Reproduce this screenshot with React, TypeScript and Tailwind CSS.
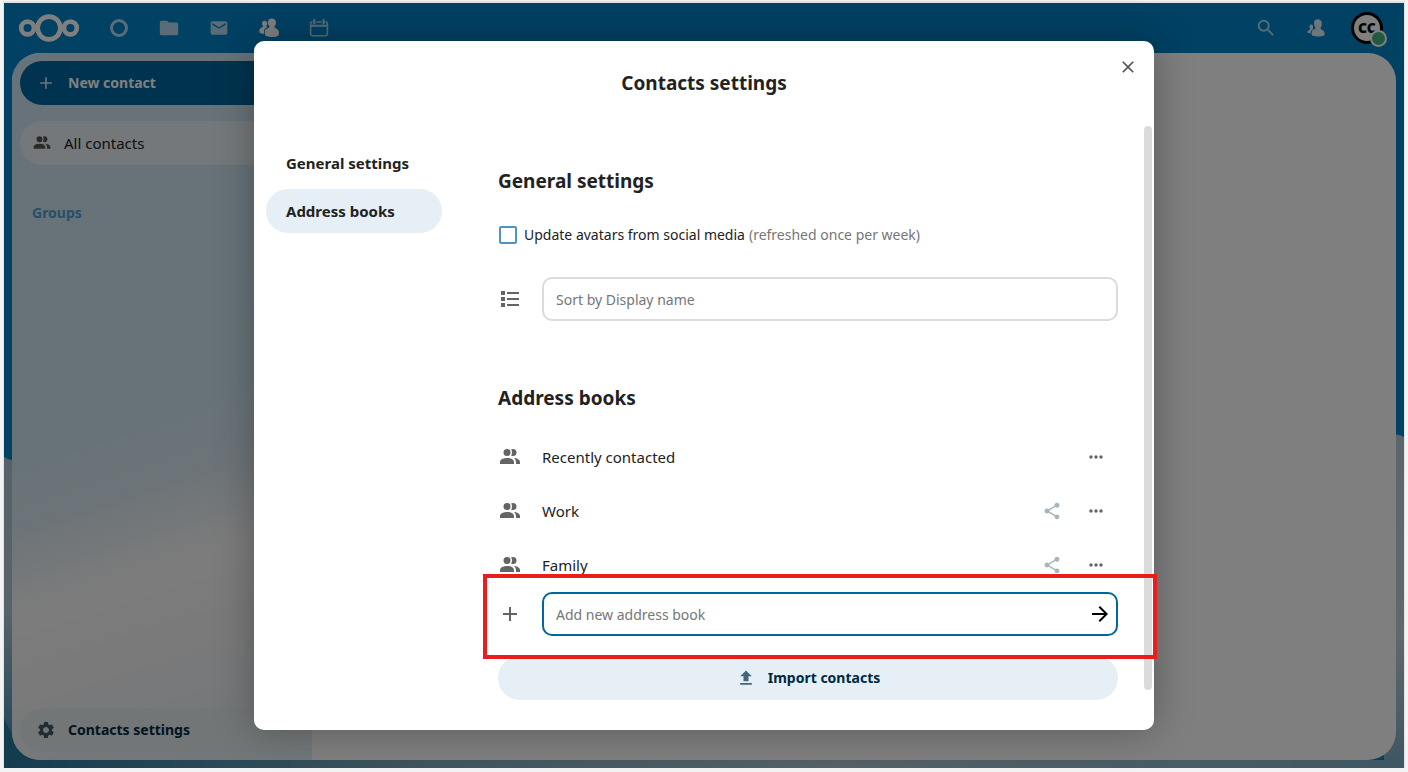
import React from "react";
import {
  MdSettings,
  MdSearch,
  MdAdd,
  MdClose,
  MdMoreHoriz,
  MdShare,
  MdUpload,
  MdFolder,
  MdEmail,
  MdArrowForward,
} from "react-icons/md";

function CloudLogo() {
  return (
    <svg width="62" height="28" viewBox="0 0 62 28" fill="none" stroke="#fff" aria-hidden="true">
      <circle cx="31" cy="14" r="11.4" strokeWidth="4.7" />
      <circle cx="9.600" cy="14" r="6.400" strokeWidth="4.7" />
      <circle cx="52.400" cy="14" r="6.400" strokeWidth="4.7" />
    </svg>
  );
}

function PeopleIcon({ size, className }: { size: number; className?: string }) {
  return (
    <svg width={size} height={size} viewBox="0 0 24 24" fill="currentColor" className={className} aria-hidden="true">
      <path d="M16 17V19H2V17S2 13 9 13 16 17 16 17M12.5 7.5A3.5 3.5 0 1 0 9 11A3.5 3.5 0 0 0 12.5 7.5M15.940 13A5.320 5.320 0 0 1 18 17V19H22V17S22 13.370 15.940 13M15 4A3.390 3.390 0 0 0 13.070 4.590A5 5 0 0 1 13.070 10.410A3.390 3.390 0 0 0 15 11A3.5 3.5 0 0 0 15 4Z" />
    </svg>
  );
}

function ContactsAppGlyph() {
  return (
    <svg width="20" height="20" viewBox="0 0 20 20" fill="currentColor" aria-hidden="true">
      <path d="M12.600.6C10.300.6 8.900 2.100 8.900 4.300c0 1.400.4 2.700 1.200 3.700.4.600.3 1.300-.2 1.700-1 .7-4.100 1.300-4.100 3.600V16c0 1.800 3 3 7 3s7-1 7-2.600v-2.600c0-2.300-2.800-3.200-3.900-4.100-.5-.4-.5-1.100-.1-1.700.8-1 1.200-2.300 1.200-3.700C17 2.100 15 .6 12.600.6z" />
      <path d="M5.500 2.800C4 2.800 3 3.900 3 5.400c0 .9.300 1.700.8 2.400.3.500.2.900-.2 1.200C2.900 9.600.4 10.200.4 12v2.200c0 .9 1.900 1.500 4.600 1.600v-2.600c0-2 1.700-3.100 3.500-3.900-.9-.2-1.300-.9-.9-1.500.4-.6.700-1.500.7-2.400 0-1.500-1.200-2.600-2.800-2.600z" />
    </svg>
  );
}

function ContactsMenuGlyph() {
  return (
    <svg width="18" height="18" viewBox="0 0 18 18" fill="currentColor" aria-hidden="true">
      <path d="M10.500.3C8.300.3 7 1.800 7 4.200c0 1.600.5 3 1.300 4 .4.600.3 1.200-.2 1.600-1 .7-3.500 1.500-3.500 3.600v2.200c0 1.200 2.700 2 6.500 2s6.500-.8 6.500-2v-1.800c0-2.200-2.600-3-3.700-3.900-.5-.4-.5-1.100-.1-1.700.7-1 1.100-2.400 1.100-4C14.900 1.800 12.900.3 10.500.3z" />
      <path d="M4.300 5.400c-1.200 0-1.900.8-1.900 2 0 .8.200 1.500.7 2.100.3.500.1.900-.3 1.200C2.200 11.100.4 11.500.4 12.800v.6c0 .5 1.300.8 3.200.8 0-2.200 1-3.200 2.400-4V7.400c0-1.200-.6-2-1.700-2z" />
    </svg>
  );
}

function CalendarGlyph() {
  return (
    <svg width="20" height="20" viewBox="0 0 20 20" fill="none" stroke="currentColor" aria-hidden="true">
      <path
        d="M3.500 4h-.5a1.400 1.400 0 0 0-1.400 1.400V16A1.800 1.800 0 0 0 3.400 17.800H16.600A1.800 1.800 0 0 0 18.400 16V5.400A1.400 1.400 0 0 0 17 4h-.5M7.500 4h5"
        strokeWidth="1.600"
      />
      <path d="M1.600 7.800h16.800" strokeWidth="2" />
      <path d="M5.300 2v3.600M14.700 2v3.600" strokeWidth="2.200" strokeLinecap="round" />
    </svg>
  );
}

function SortGlyph() {
  return (
    <svg width="20" height="20" viewBox="0 0 20 20" fill="currentColor" aria-hidden="true">
      <path d="M1 2h4v4H1zM1 8h4v4H1zM1 14h4v4H1zM7 3h12v2H7zM7 9h12v2H7zM7 15h12v2H7z" />
    </svg>
  );
}

function CloudBackdrop() {
  return (
    <svg
      className="absolute inset-0 size-full"
      viewBox="0 0 1400 765"
      preserveAspectRatio="none"
      aria-hidden="true"
    >
      <defs>
        <linearGradient id="cloud-left" x1="0" y1="0" x2="0" y2="1">
          <stop offset="0" stopColor="#a9c6d4" />
          <stop offset="0.500" stopColor="#b0c6d2" />
          <stop offset="1" stopColor="#2c86b4" />
        </linearGradient>
        <linearGradient id="cloud-right" x1="0" y1="0" x2="0" y2="1">
          <stop offset="0" stopColor="#b4ccd8" />
          <stop offset="0.600" stopColor="#c4d0d6" />
          <stop offset="1" stopColor="#7cacc4" />
        </linearGradient>
        <linearGradient id="cloud-floor" x1="0" y1="0" x2="1" y2="0">
          <stop offset="0" stopColor="#28789f" />
          <stop offset="0.300" stopColor="#7fa9bd" />
          <stop offset="0.600" stopColor="#aac4d0" />
          <stop offset="1" stopColor="#7fb0c8" />
        </linearGradient>
      </defs>
      <rect width="1400" height="765" fill="#0082c9" />
      <path d="M0 454Q8 458 20 460V765H0Z" fill="url(#cloud-left)" />
      <path d="M1380 430Q1392 430 1400 434V765H1380Z" fill="url(#cloud-right)" />
      <path d="M0 757H1400V765H0Z" fill="url(#cloud-floor)" />
      <path d="M0 715Q12 745 40 757H0Z" fill="#28789f" />
    </svg>
  );
}

function Avatar() {
  return (
    <span className="relative flex size-8 items-center justify-center rounded-full border-3 border-black bg-white text-sm font-black text-black">
      CC
      <span className="absolute -right-[7px] -bottom-[6px] size-[17px] rounded-full border-2 border-white bg-[#49b382]" />
    </span>
  );
}

const apps = [
  { name: "Dashboard", icon: <span className="block size-[18px] rounded-full border-3 border-current" /> },
  { name: "Files", icon: <MdFolder size={22} /> },
  { name: "Mail", icon: <MdEmail size={20} /> },
  { name: "Contacts", icon: <ContactsAppGlyph />, active: true },
  { name: "Calendar", icon: <CalendarGlyph /> },
];

function Header() {
  return (
    <header className="relative flex h-[50px] items-center justify-between pr-[21px] pl-[14px] text-white">
      <div className="flex items-center">
        <a href="#home" aria-label="Home">
          <CloudLogo />
        </a>
        <nav className="ml-[14px] flex">
          {apps.map((app) => (
            <a
              key={app.name}
              href={`#${app.name.toLowerCase()}`}
              aria-label={app.name}
              className={`flex h-[50px] w-[50px] items-center justify-center ${app.active ? "text-white" : "text-[#b2d9ef]"}`}
            >
              {app.icon}
            </a>
          ))}
        </nav>
      </div>
      <div className="flex items-center text-[#b2d9ef]">
        <button aria-label="Search" className="flex size-[50px] items-center justify-center">
          <MdSearch size={22} />
        </button>
        <button aria-label="Contacts menu" className="flex size-[50px] items-center justify-center text-[#d9ecf7]">
          <ContactsMenuGlyph />
        </button>
        <button aria-label="Account" className="ml-[10px] flex items-center justify-center">
          <Avatar />
        </button>
      </div>
    </header>
  );
}

function Sidebar() {
  return (
    <aside className="flex w-[300px] flex-col justify-between bg-[linear-gradient(162deg,#cfe7f4_0%,#cfe6f1_50%,#dbe8f0_60%,#f9f9f9_70%,#f4f4f4_80%,#e6eff5_95%,#e4eef6_100%)]">
      <div className="flex flex-col p-2">
        <button className="flex h-11 items-center gap-3 rounded-full bg-[#00679e] px-4 text-sm font-bold text-white">
          <MdAdd size={20} className="text-[#d9e8f1]" />
          New contact
        </button>
        <a href="#all" className="mt-4 flex h-11 items-center gap-3 rounded-full bg-[#e8f1f4] px-3 text-[15px] text-[#222]">
          <PeopleIcon size={20} className="text-[#555]" />
          All contacts
        </a>
        <h2 className="mt-9 px-3 text-sm leading-6 font-bold text-[#4c9fcb]">Groups</h2>
      </div>
      <div className="flex flex-col p-2">
        <button className="flex h-11 items-center gap-3 rounded-full bg-[#e6ecee] px-4 text-sm font-bold text-[#002a41]">
          <MdSettings size={20} className="text-[#3f5a6a]" />
          Contacts settings
        </button>
      </div>
    </aside>
  );
}

const books = [
  { name: "Recently contacted", shareable: false },
  { name: "Work", shareable: true },
  { name: "Family", shareable: true },
];

function SettingsDialog() {
  return (
    <section
      role="dialog"
      aria-labelledby="dialog-title"
      className="relative flex h-[90%] w-full max-w-[900px] flex-col rounded-[10px] bg-white text-sm text-[#222] shadow-[0_0_40px_rgba(0,0,0,0.3)]"
    >
      <h2 id="dialog-title" className="pt-7 text-center text-[19px] leading-7 font-bold">
        Contacts settings
      </h2>
      <button aria-label="Close" className="absolute top-1 right-1 flex size-11 items-center justify-center text-[#555]">
        <MdClose size={20} />
      </button>
      <div className="mt-[29px] mb-10 flex min-h-0 flex-1 pr-[2px] pl-3">
        <nav className="mt-[15px] flex w-44 flex-col gap-1 text-[15px] font-bold">
          <a href="#general" className="flex h-11 items-center rounded-full px-5">
            General settings
          </a>
          <a href="#books" className="flex h-11 items-center rounded-full bg-[#e5eff5] px-5">
            Address books
          </a>
        </nav>
        <div className="mr-[26px] ml-14 flex-1 pt-[41px]">
          <h3 id="general" className="text-[19px] leading-7 font-bold">General settings</h3>
          <label className="mt-[18px] flex h-11 items-center">
            <input
              type="checkbox"
              className="mr-[7px] ml-px size-[18px] appearance-none rounded-[2px] border-2 border-[#4c95c1] bg-white"
            />
            Update avatars from social media
            <span className="ml-1 text-[#767676]">(refreshed once per week)</span>
          </label>
          <div className="mt-5 flex items-center gap-[22px]">
            <span className="ml-[2px] text-[#646464]">
              <SortGlyph />
            </span>
            <input
              type="text"
              aria-label="Sort order"
              placeholder="Sort by Display name"
              className="h-11 min-w-0 flex-1 rounded-[10px] border-2 border-[#dbdbdb] px-3 placeholder:text-[#767676]"
            />
          </div>
          <h3 id="books" className="mt-[63px] text-[19px] leading-7 font-bold">Address books</h3>
          <ul className="mt-[23px] flex flex-col gap-[10px]">
            {books.map((book) => (
              <li key={book.name} className="flex h-11 items-center">
                <PeopleIcon size={24} className="mr-5 text-[#646464]" />
                <span className="flex-1 text-[15px]">{book.name}</span>
                {book.shareable && (
                  <button aria-label={`Share ${book.name}`} className="flex size-11 items-center justify-center text-[#a5b4bd]">
                    <MdShare size={20} />
                  </button>
                )}
                <button aria-label={`Actions for ${book.name}`} className="flex size-11 items-center justify-center text-[#646464]">
                  <MdMoreHoriz size={20} />
                </button>
              </li>
            ))}
          </ul>
          <form className="relative mt-[5px] flex items-center" onSubmit={(event) => event.preventDefault()}>
            <MdAdd size={24} className="mr-5 text-[#646464]" />
            <div className="relative flex flex-1">
              <input
                type="text"
                aria-label="Add new address book"
                placeholder="Add new address book"
                className="h-11 min-w-0 flex-1 rounded-[10px] border-2 border-[#00679e] pr-10 pl-3 placeholder:text-[#767676]"
              />
              <button aria-label="Add" className="absolute inset-y-0 right-0 flex w-9 items-center justify-center text-black">
                <MdArrowForward size={24} />
              </button>
            </div>
            <div className="pointer-events-none absolute -top-[18px] -right-[39px] -bottom-[23px] -left-[15px] border-4 border-[#eb1c1c]" />
          </form>
          <button className="mt-5 flex h-11 w-full items-center justify-center gap-3 rounded-full bg-[#e5eff5] font-bold text-[#002a41]">
            <MdUpload size={20} className="text-[#46677b]" />
            Import contacts
          </button>
        </div>
        <div className="w-2 rounded-full bg-[#dbdbdb]" />
      </div>
    </section>
  );
}

export default function App() {
  return (
    <div className="flex min-h-screen flex-col bg-[#f3f3f3] px-1 pt-[3px] pb-1 font-['Noto_Sans',sans-serif]">
      <div className="relative flex flex-1 flex-col shadow-[0_-1px_0_1px_#e2e2e2]">
        <CloudBackdrop />
        <Header />
        <main className="relative mx-2 mb-2 flex flex-1 overflow-hidden rounded-[28px] bg-white">
          <Sidebar />
        </main>
        <div className="absolute inset-0 flex items-center justify-center bg-black/50">
          <SettingsDialog />
        </div>
      </div>
    </div>
  );
}
